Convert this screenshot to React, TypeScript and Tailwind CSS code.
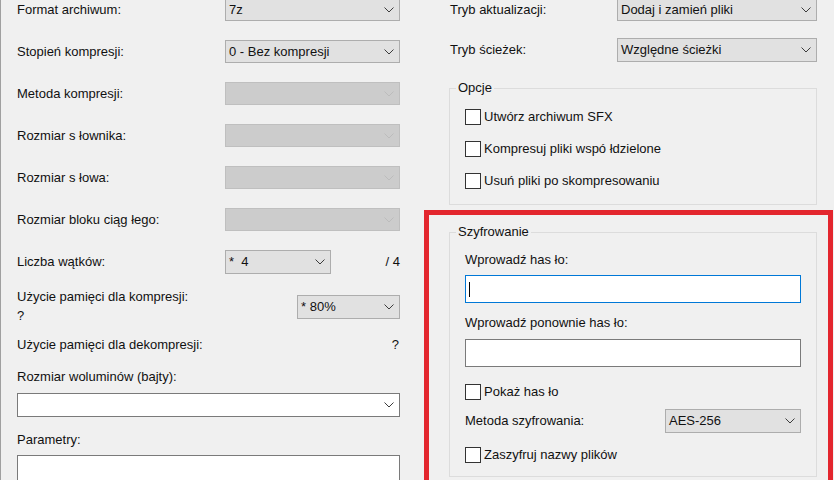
import type { ReactNode } from 'react';

const Chevron = ({ disabled }: { disabled?: boolean }) => (
  <svg width="10" height="6" viewBox="0 0 10 6" className="shrink-0">
    <path
      d="M0.5 0.5L5 5L9.5 0.5"
      fill="none"
      stroke={disabled ? '#bcbcbc' : '#3c3c3c'}
      strokeWidth="1"
    />
  </svg>
);

const Combo = ({
  value = '',
  className = '',
  disabled = false,
  white = false,
}: {
  value?: string;
  className?: string;
  disabled?: boolean;
  white?: boolean;
}) => {
  const tone = disabled
    ? 'bg-[#cccccc] border-[#bfbfbf]'
    : white
      ? 'bg-white border-[#7a7a7a]'
      : 'bg-[#e1e1e1] border-[#adadad]';
  return (
    <div className={`shrink-0 flex items-center justify-between border pl-[3px] pr-[5px] ${tone} ${className}`}>
      <span className="whitespace-pre">{value}</span>
      <Chevron disabled={disabled} />
    </div>
  );
};

const Row = ({ label, children }: { label: string; children: ReactNode }) => (
  <div className="flex items-center h-[23px]">
    <span className="w-[208px] shrink-0">{label}</span>
    {children}
  </div>
);

const Check = ({ label }: { label: string }) => (
  <div className="flex items-center h-4">
    <span className="w-4 h-4 border border-[#333333] bg-white shrink-0" />
    <span className="ml-[3px] whitespace-pre">{label}</span>
  </div>
);

const App = () => {
  return (
    <div className="w-[834px] h-[480px] overflow-hidden bg-[#f0f0f0] border-l border-[#a0a0a0] pl-[16px] flex items-start text-[13px] leading-[16px] text-[#111111] font-['Liberation_Sans',Arial,sans-serif]">
      {/* left column */}
      <div className="w-[383px] shrink-0 flex flex-col mt-[-2px]">
        <div className="flex flex-col gap-[19px]">
          <Row label="Format archiwum:">
            <Combo value="7z" className="w-[175px] h-[23px]" />
          </Row>
          <Row label="Stopień kompresji:">
            <Combo value="0 - Bez kompresji" className="w-[175px] h-[23px]" />
          </Row>
          <Row label="Metoda kompresji:">
            <Combo disabled className="w-[175px] h-[23px]" />
          </Row>
          <Row label="Rozmiar s łownika:">
            <Combo disabled className="w-[175px] h-[23px]" />
          </Row>
          <Row label="Rozmiar s łowa:">
            <Combo disabled className="w-[175px] h-[23px]" />
          </Row>
          <Row label="Rozmiar bloku ciąg łego:">
            <Combo disabled className="w-[175px] h-[23px]" />
          </Row>
          <Row label="Liczba wątków:">
            <Combo value="*  4" className="w-[106px] h-[24px]" />
            <span className="flex-1 text-right">/ 4</span>
          </Row>
        </div>

        <div className="flex items-start mt-[14px]">
          <div className="w-[280px] shrink-0 leading-[19px]">
            <div>Użycie pamięci dla kompresji:</div>
            <div>?</div>
          </div>
          <Combo value="* 80%" className="w-[103px] h-[24px] mt-[8px]" />
        </div>

        <div className="flex justify-between leading-[19px] mt-[10px]">
          <span>Użycie pamięci dla dekompresji:</span>
          <span className="pr-[1px]">?</span>
        </div>

        <div className="leading-[19px] mt-[13px]">Rozmiar woluminów (bajty):</div>
        <Combo white className="w-full h-[24px] mt-[7px]" />

        <div className="leading-[19px] mt-[13px]">Parametry:</div>
        <div className="shrink-0 w-full h-[60px] mt-[6px] bg-white border border-[#7a7a7a]" />
      </div>

      {/* right column */}
      <div className="w-[410px] shrink-0 ml-[24px] flex flex-col mt-[-2px]">
        <div className="flex flex-col gap-[17px] pl-[26px]">
          <div className="flex items-center h-[23px]">
            <span className="w-[167px] shrink-0">Tryb aktualizacji:</span>
            <Combo value="Dodaj i zamień pliki" className="w-[200px] h-[23px]" />
          </div>
          <div className="flex items-center h-[23px]">
            <span className="w-[167px] shrink-0">Tryb ścieżek:</span>
            <Combo value="Względne ścieżki" className="w-[200px] h-[24px]" />
          </div>
        </div>

        <fieldset className="ml-[25px] w-[368px] mt-[19px] border border-[#dcdcdc] pl-[6px] pt-[13px] pb-[15px]">
          <legend className="px-[2px]">Opcje</legend>
          <div className="pl-[9px] flex flex-col gap-4">
            <Check label="Utwórz archiwum SFX" />
            <Check label="Kompresuj pliki wspó łdzielone" />
            <Check label="Usuń pliki po skompresowaniu" />
          </div>
        </fieldset>

        <div className="shrink-0 mt-[5px] w-[409px] border-[5px] border-[#e3262e] pl-[20px] pr-[11px] pt-[9px] pb-[10px]">
          <fieldset className="w-[368px] border border-[#dcdcdc] pl-[6px] pr-[15px] pt-[12px] pb-[13px]">
            <legend className="px-[2px]">Szyfrowanie</legend>
            <div className="pl-[9px] flex flex-col">
              <div>Wprowadź has ło:</div>
              <div className="mt-[7px] h-[28px] bg-white border border-[#0078d7] flex items-center pl-[3px]">
                <span className="w-px h-[15px] bg-black" />
              </div>
              <div className="mt-[12px]">Wprowadź ponownie has ło:</div>
              <div className="mt-[8px] h-[28px] bg-white border border-[#7a7a7a]" />
              <div className="mt-[17px]">
                <Check label="Pokaż has ło" />
              </div>
              <div className="mt-[9px] flex items-center justify-between h-[24px]">
                <span>Metoda szyfrowania:</span>
                <Combo value="AES-256" className="w-[136px] h-[24px]" />
              </div>
              <div className="mt-[14px]">
                <Check label="Zaszyfruj nazwy plików" />
              </div>
            </div>
          </fieldset>
        </div>
      </div>
    </div>
  );
};

export default App;
